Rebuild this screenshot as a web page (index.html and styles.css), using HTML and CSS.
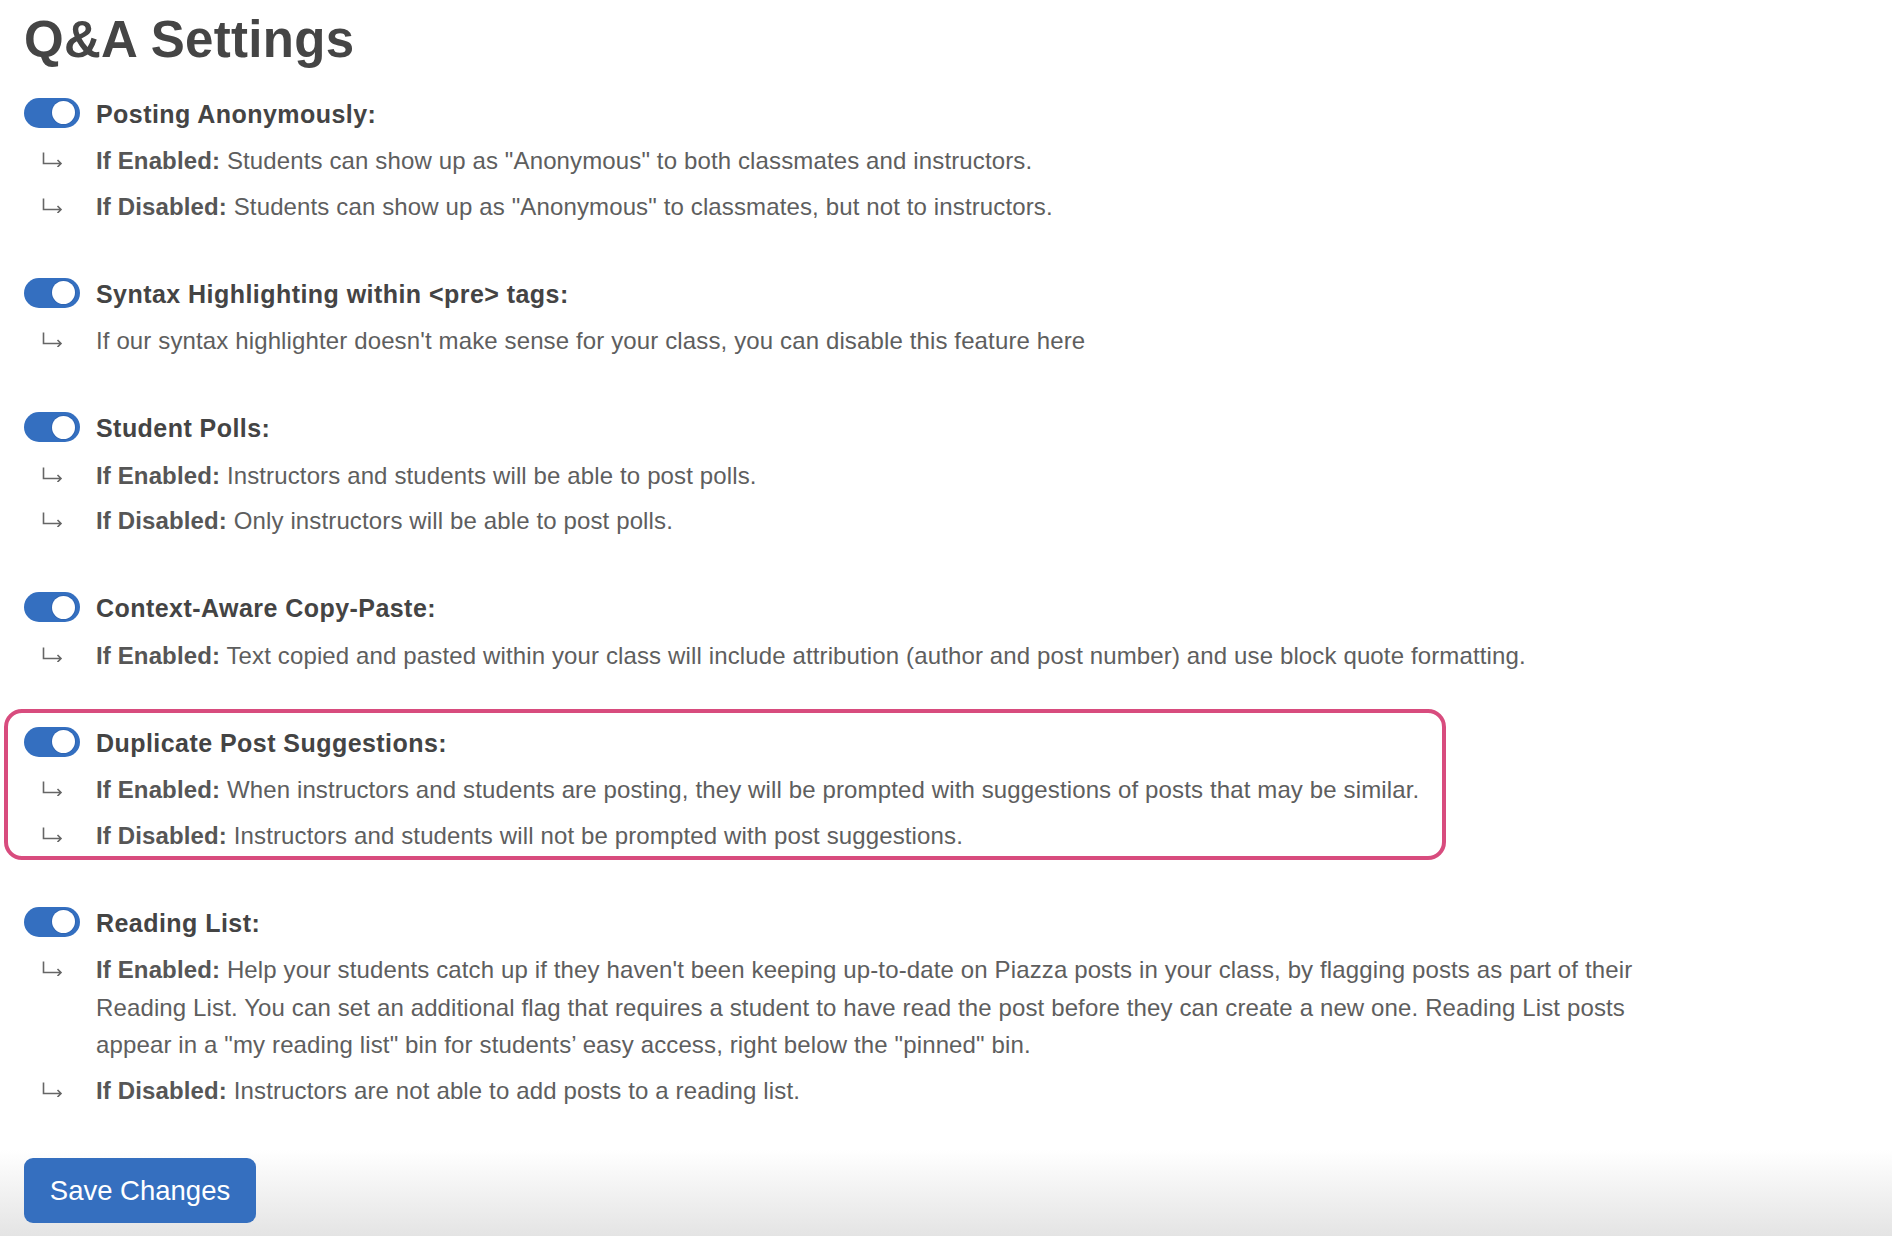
FILE: index.html
```html
<!DOCTYPE html>
<html lang="en">
<head>
<meta charset="utf-8">
<title>Q&amp;A Settings</title>
<link rel="stylesheet" href="styles.css">
</head>
<body>
<main class="page">
  <h1 class="title">Q&amp;A Settings</h1>

  <section class="setting">
    <div class="setting-head"><span class="toggle"><span class="knob"></span></span><span class="setting-name">Posting Anonymously:</span></div>
    <ul class="details">
      <li class="detail"><span class="arrow"><svg width="21" height="15" viewBox="0 0 21 15"><path d="M1.5 0.5 V11.5 H19 M15.5 8 L19 11.5 L15.5 15" fill="none" stroke="currentColor" stroke-width="1.6"/></svg></span><p class="detail-text"><b>If Enabled:</b> Students can show up as "Anonymous" to both classmates and instructors.</p></li>
      <li class="detail"><span class="arrow"><svg width="21" height="15" viewBox="0 0 21 15"><path d="M1.5 0.5 V11.5 H19 M15.5 8 L19 11.5 L15.5 15" fill="none" stroke="currentColor" stroke-width="1.6"/></svg></span><p class="detail-text"><b>If Disabled:</b> Students can show up as "Anonymous" to classmates, but not to instructors.</p></li>
    </ul>
  </section>

  <section class="setting">
    <div class="setting-head"><span class="toggle"><span class="knob"></span></span><span class="setting-name">Syntax Highlighting within &lt;pre&gt; tags:</span></div>
    <ul class="details">
      <li class="detail"><span class="arrow"><svg width="21" height="15" viewBox="0 0 21 15"><path d="M1.5 0.5 V11.5 H19 M15.5 8 L19 11.5 L15.5 15" fill="none" stroke="currentColor" stroke-width="1.6"/></svg></span><p class="detail-text">If our syntax highlighter doesn't make sense for your class, you can disable this feature here</p></li>
    </ul>
  </section>

  <section class="setting">
    <div class="setting-head"><span class="toggle"><span class="knob"></span></span><span class="setting-name">Student Polls:</span></div>
    <ul class="details">
      <li class="detail"><span class="arrow"><svg width="21" height="15" viewBox="0 0 21 15"><path d="M1.5 0.5 V11.5 H19 M15.5 8 L19 11.5 L15.5 15" fill="none" stroke="currentColor" stroke-width="1.6"/></svg></span><p class="detail-text"><b>If Enabled:</b> Instructors and students will be able to post polls.</p></li>
      <li class="detail"><span class="arrow"><svg width="21" height="15" viewBox="0 0 21 15"><path d="M1.5 0.5 V11.5 H19 M15.5 8 L19 11.5 L15.5 15" fill="none" stroke="currentColor" stroke-width="1.6"/></svg></span><p class="detail-text"><b>If Disabled:</b> Only instructors will be able to post polls.</p></li>
    </ul>
  </section>

  <section class="setting">
    <div class="setting-head"><span class="toggle"><span class="knob"></span></span><span class="setting-name">Context-Aware Copy-Paste:</span></div>
    <ul class="details">
      <li class="detail"><span class="arrow"><svg width="21" height="15" viewBox="0 0 21 15"><path d="M1.5 0.5 V11.5 H19 M15.5 8 L19 11.5 L15.5 15" fill="none" stroke="currentColor" stroke-width="1.6"/></svg></span><p class="detail-text"><b>If Enabled:</b> Text copied and pasted within your class will include attribution (author and post number) and use block quote formatting.</p></li>
    </ul>
  </section>

  <section class="setting setting-highlight">
    <div class="setting-head"><span class="toggle"><span class="knob"></span></span><span class="setting-name">Duplicate Post Suggestions:</span></div>
    <ul class="details">
      <li class="detail"><span class="arrow"><svg width="21" height="15" viewBox="0 0 21 15"><path d="M1.5 0.5 V11.5 H19 M15.5 8 L19 11.5 L15.5 15" fill="none" stroke="currentColor" stroke-width="1.6"/></svg></span><p class="detail-text"><b>If Enabled:</b> When instructors and students are posting, they will be prompted with suggestions of posts that may be similar.</p></li>
      <li class="detail"><span class="arrow"><svg width="21" height="15" viewBox="0 0 21 15"><path d="M1.5 0.5 V11.5 H19 M15.5 8 L19 11.5 L15.5 15" fill="none" stroke="currentColor" stroke-width="1.6"/></svg></span><p class="detail-text"><b>If Disabled:</b> Instructors and students will not be prompted with post suggestions.</p></li>
    </ul>
  </section>

  <section class="setting">
    <div class="setting-head"><span class="toggle"><span class="knob"></span></span><span class="setting-name">Reading List:</span></div>
    <ul class="details">
      <li class="detail"><span class="arrow"><svg width="21" height="15" viewBox="0 0 21 15"><path d="M1.5 0.5 V11.5 H19 M15.5 8 L19 11.5 L15.5 15" fill="none" stroke="currentColor" stroke-width="1.6"/></svg></span><p class="detail-text"><b>If Enabled:</b> Help your students catch up if they haven't been keeping up-to-date on Piazza posts in your class, by flagging posts as part of their Reading List. You can set an additional flag that requires a student to have read the post before they can create a new one. Reading List posts appear in a "my reading list" bin for students’ easy access, right below the "pinned" bin.</p></li>
      <li class="detail"><span class="arrow"><svg width="21" height="15" viewBox="0 0 21 15"><path d="M1.5 0.5 V11.5 H19 M15.5 8 L19 11.5 L15.5 15" fill="none" stroke="currentColor" stroke-width="1.6"/></svg></span><p class="detail-text"><b>If Disabled:</b> Instructors are not able to add posts to a reading list.</p></li>
    </ul>
  </section>

  <button class="save" type="button">Save Changes</button>
</main>
</body>
</html>
```

FILE: styles.css
```css
html, body {
  margin: 0;
  padding: 0;
}
body {
  height: 1236px;
  overflow: hidden;
  font-family: "Liberation Sans", Arial, Helvetica, sans-serif;
  color: #5c5c5c;
  background: linear-gradient(180deg, #ffffff 0, #ffffff 1150px, #e4e4e4 1236px);
}
.page {
  padding: 10px 24px 0 24px;
}
.title {
  margin: 0 0 24px 0;
  font-size: 51px;
  letter-spacing: 0.3px;
  line-height: 60px;
  font-weight: 700;
  color: #454545;
}
.setting {
  margin: 0 0 49px 0;
}
.setting-head {
  display: flex;
  align-items: center;
  gap: 16px;
  height: 37px;
  margin-bottom: 11px;
}
.toggle {
  flex: none;
  position: relative;
  width: 56px;
  height: 30px;
  border-radius: 15px;
  background: #346fc0;
}
.knob {
  position: absolute;
  top: 3.5px;
  left: 28px;
  width: 23px;
  height: 23px;
  border-radius: 50%;
  background: #ffffff;
  box-shadow: 0 0 0 1px #2d64b2;
}
.setting-name {
  padding-top: 3px;
  font-size: 25px;
  letter-spacing: 0.45px;
  font-weight: 700;
  color: #444444;
  line-height: 37px;
}
.details {
  list-style: none;
  margin: 0;
  padding: 0;
  display: flex;
  flex-direction: column;
  gap: 8px;
}
.detail {
  display: grid;
  grid-template-columns: 72px 1570px;
  font-size: 24px;
  letter-spacing: 0.13px;
  line-height: 37.5px;
}
.arrow {
  display: block;
  padding: 10px 0 0 18px;
  color: #666666;
  line-height: 0;
}
.detail-text {
  margin: 0;
  color: #5e5e5e;
}
.detail-text b {
  color: #565656;
}
.setting-highlight {
  width: 1442px;
  box-sizing: border-box;
  margin: -14px 0 43px -20px;
  padding: 10px 16px 2px 16px;
  border: 4px solid #d84c7e;
  border-radius: 18px;
}
.setting-highlight .detail {
  grid-template-columns: 72px auto;
}
.save {
  display: block;
  margin-top: 47px;
  width: 232px;
  height: 65px;
  border: none;
  border-radius: 9px;
  background: #356fbf;
  color: #ffffff;
  font-family: "Liberation Sans", Arial, Helvetica, sans-serif;
  font-size: 27.5px;
  padding: 0;
}
```
